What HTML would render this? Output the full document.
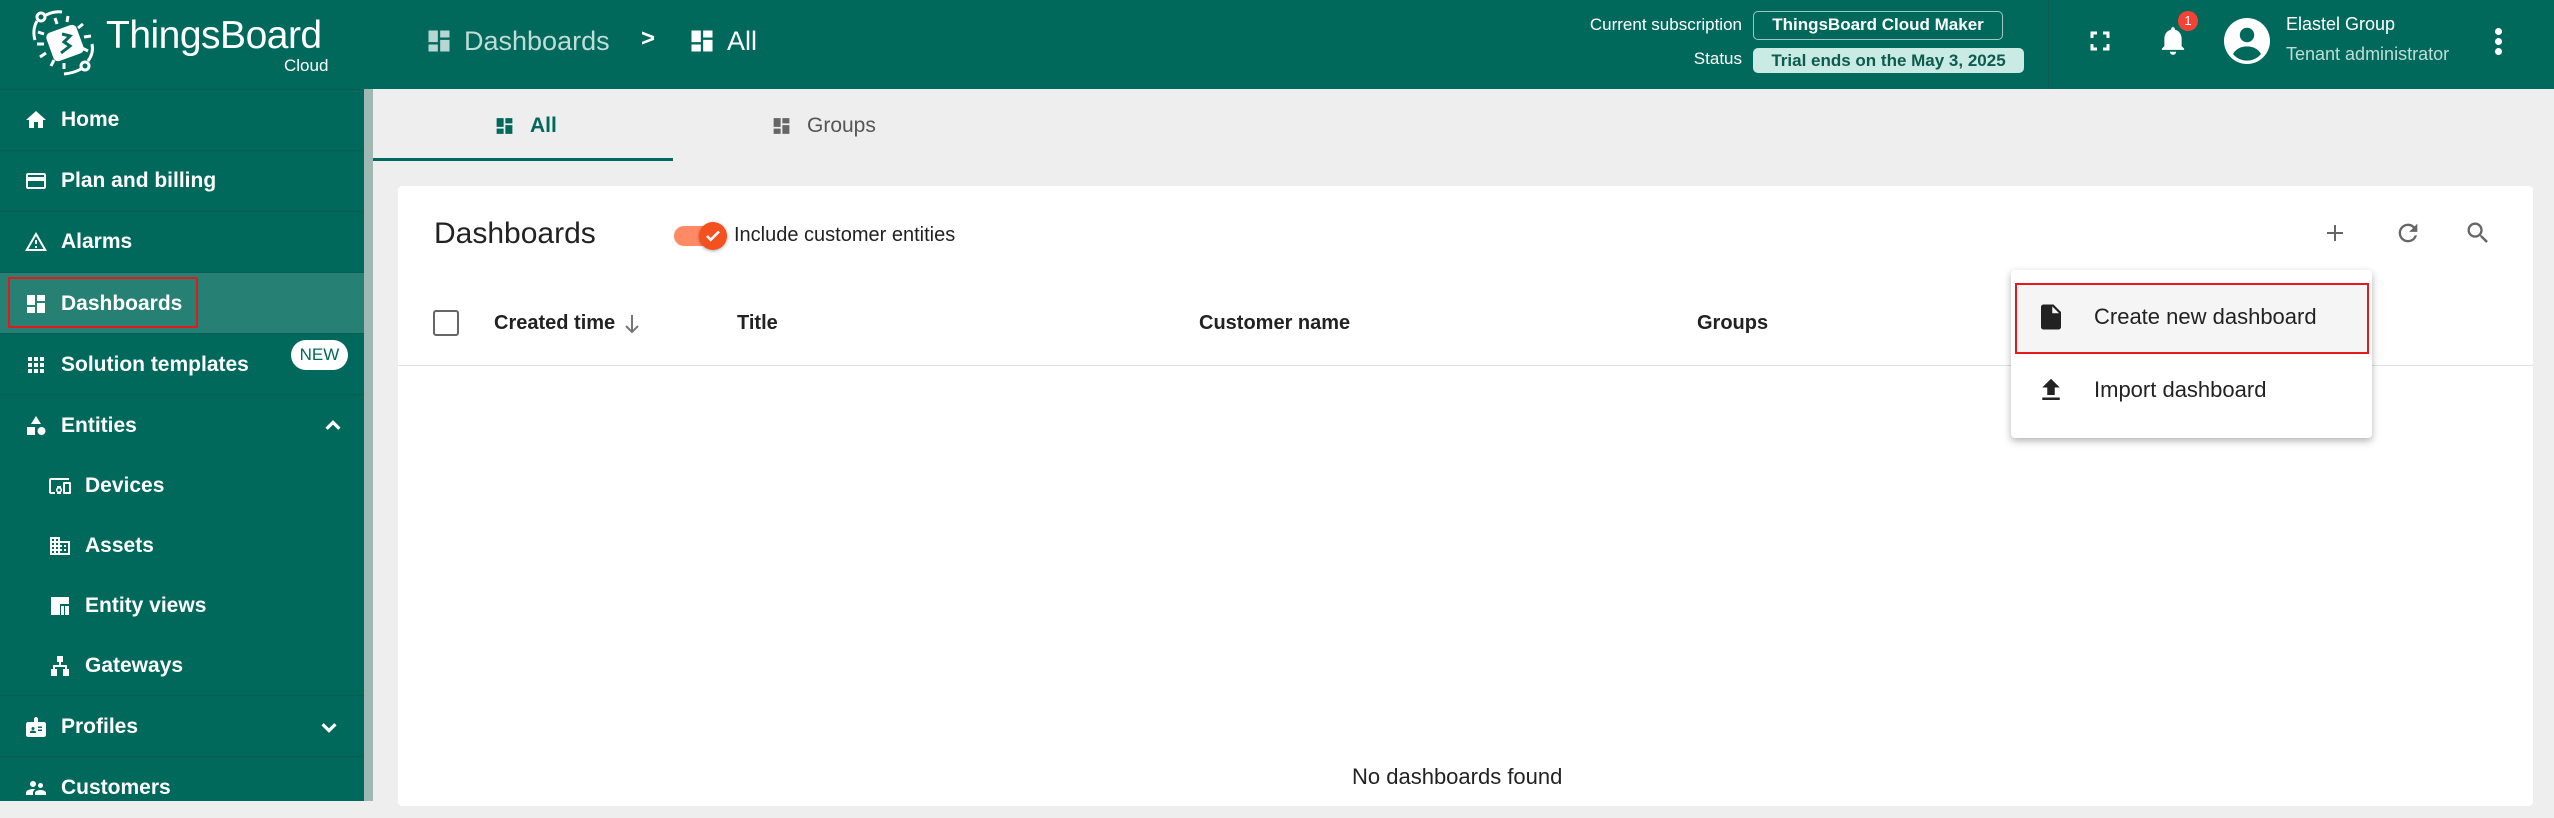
<!DOCTYPE html>
<html><head><meta charset="utf-8"><style>
*{box-sizing:border-box;margin:0;padding:0}
body{width:2554px;height:801px;overflow:hidden;background:#eeeeee;font-family:"Liberation Sans",sans-serif;position:relative}
.abs{position:absolute}
.hdr{left:0;top:0;width:2554px;height:89px;background:#00695c}
.side{left:0;top:89px;width:364px;height:712px;background:#00695c}
.scroll{left:364px;top:89px;width:9px;height:712px;background:#9fb8b3}
.item{position:absolute;left:0;width:364px;height:61px;color:#fff;font-size:21px;font-weight:bold;display:flex;align-items:center}
.item .t{position:absolute;left:61px}
.item.sub .t{left:85px}
.item svg{position:absolute;left:24px}
.item.sub svg{left:48px}
.div{position:absolute;left:0;width:364px;height:1px;background:#0b5d52}
.hw{color:#fff}
.card{left:398px;top:186px;width:2135px;height:620px;background:#fff;border-radius:4px}
.th{position:absolute;top:312px;font-size:20px;font-weight:bold;color:#222}
</style></head><body>
<div class="abs hdr"></div>
<!-- logo -->
<svg class="abs" style="left:24px;top:8px" width="82" height="68" viewBox="0 0 82 68">
<g fill="none" stroke="#fff" stroke-width="3"><circle cx="17" cy="9" r="4"/><path d="M22 7 Q30 3 38 4"/><path d="M13 13 Q8 22 11 32"/><circle cx="61" cy="58" r="4"/><path d="M57 61 Q50 65 40 66"/><path d="M64 53 Q70 45 68 36"/></g>
<g fill="#fff"><rect x="25" y="20" width="32" height="30" rx="5" transform="rotate(-20 41 35)"/></g>
<g stroke="#fff" stroke-width="3"><path d="M20 26l-6-2M20 36l-7 0M22 45l-6 4M33 16l-2-6M43 14l1-6M54 20l5-4M60 29l7-1M58 40l6 3M40 55l0 6M30 52l-3 6"/></g>
<path d="M38 26l8 2-6 6 6 4-9 7" stroke="#00695c" stroke-width="3" fill="none"/>
</svg>
<div class="abs hw" style="left:106px;top:14px;font-size:39px;letter-spacing:-0.5px">ThingsBoard</div>
<div class="abs hw" style="left:284px;top:56px;font-size:17px">Cloud</div>
<!-- breadcrumb -->
<svg class="abs" style="left:425px;top:27px" width="28" height="28" viewBox="0 0 24 24"><path fill="#b7d6d1" d="M3 13h8V3H3v10zm0 8h8v-6H3v6zm10 0h8V11h-8v10zm0-18v6h8V3h-8z"/></svg>
<div class="abs" style="left:464px;top:26px;font-size:27px;color:#c0dcd7">Dashboards</div>
<div class="abs hw" style="left:641px;top:25px;font-size:24px;font-weight:bold">&gt;</div>
<svg class="abs" style="left:688px;top:27px" width="28" height="28" viewBox="0 0 24 24"><path fill="#fff" d="M3 13h8V3H3v10zm0 8h8v-6H3v6zm10 0h8V11h-8v10zm0-18v6h8V3h-8z"/></svg>
<div class="abs hw" style="left:727px;top:26px;font-size:27px">All</div>
<!-- header right -->
<div class="abs hw" style="left:1500px;width:1242px;top:15px;font-size:17px;text-align:right;width:242px">Current subscription</div>
<div class="abs hw" style="left:1753px;top:11px;width:250px;height:29px;border:1.5px solid #9cc9c1;border-radius:5px;font-size:17px;font-weight:bold;text-align:center;line-height:26px">ThingsBoard Cloud Maker</div>
<div class="abs hw" style="left:1500px;top:49px;font-size:17px;text-align:right;width:242px">Status</div>
<div class="abs" style="left:1753px;top:48px;width:271px;height:25px;background:#c9ebe3;border-radius:5px;font-size:17px;font-weight:bold;color:#0b5b50;text-align:center;line-height:25px">Trial ends on the May 3, 2025</div>
<div class="abs" style="left:2048px;top:0;width:1px;height:89px;background:#0b5d52"></div>
<svg class="abs" style="left:2088px;top:29px" width="24" height="24" viewBox="0 0 24 24"><path fill="none" stroke="#fff" stroke-width="3" d="M4 9V4h5M15 4h5v5M20 15v5h-5M9 20H4v-5"/></svg>
<svg class="abs" style="left:2158px;top:24px" width="30" height="32" viewBox="0 0 24 26"><path fill="#fff" d="M12 25c1.4 0 2.5-1.1 2.5-2.5h-5c0 1.4 1.1 2.5 2.5 2.5zm7-7v-6c0-3.7-2-6.6-5.5-7.4V4c0-.8-.7-1.5-1.5-1.5S10.5 3.2 10.5 4v.6C7 5.4 5 8.3 5 12v6l-2 2v1h18v-1l-2-2z"/></svg>
<div class="abs hw" style="left:2178px;top:11px;width:20px;height:20px;border-radius:10px;background:#f44336;font-size:13px;text-align:center;line-height:20px">1</div>
<svg class="abs" style="left:2223px;top:17px" width="48" height="48" viewBox="0 0 24 24"><circle cx="12" cy="12" r="11.5" fill="#fff"/><circle cx="12" cy="9" r="3.6" fill="#00695c"/><path d="M5 18.5c1.5-2.6 4.1-3.8 7-3.8s5.5 1.2 7 3.8A9 9 0 0 1 5 18.5z" fill="#00695c"/></svg>
<div class="abs hw" style="left:2286px;top:14px;font-size:18px">Elastel Group</div>
<div class="abs" style="left:2286px;top:44px;font-size:18px;color:#c0dcd7">Tenant administrator</div>
<div class="abs" style="left:2495px;top:28px;width:7px;height:7px;border-radius:4px;background:#fff"></div>
<div class="abs" style="left:2495px;top:38px;width:7px;height:7px;border-radius:4px;background:#fff"></div>
<div class="abs" style="left:2495px;top:48px;width:7px;height:7px;border-radius:4px;background:#fff"></div>

<!-- sidebar -->
<div class="abs side">
<div class="div" style="top:0"></div>
<div class="item" style="top:0"><svg width="24" height="24" viewBox="0 0 24 24"><path fill="#fff" d="M10 20v-6h4v6h5v-8h3L12 3 2 12h3v8z"/></svg><span class="t">Home</span></div>
<div class="div" style="top:61px"></div>
<div class="item" style="top:61px"><svg width="24" height="24" viewBox="0 0 24 24"><path fill="#fff" d="M20 4H4c-1.1 0-2 .9-2 2v12c0 1.1.9 2 2 2h16c1.1 0 2-.9 2-2V6c0-1.1-.9-2-2-2zm0 14H4v-6h16v6zm0-10H4V6h16v2z"/></svg><span class="t">Plan and billing</span></div>
<div class="div" style="top:122px"></div>
<div class="item" style="top:122px"><svg width="24" height="24" viewBox="0 0 24 24"><path fill="#fff" d="M12 5.99L19.53 19H4.47L12 5.99M12 2L1 21h22L12 2zm1 14h-2v2h2v-2zm0-6h-2v4h2v-4z"/></svg><span class="t">Alarms</span></div>
<div class="div" style="top:183px"></div>
<div class="item" style="top:184px;background:#268073"><svg width="24" height="24" viewBox="0 0 24 24"><path fill="#fff" d="M3 13h8V3H3v10zm0 8h8v-6H3v6zm10 0h8V11h-8v10zm0-18v6h8V3h-8z"/></svg><span class="t">Dashboards</span></div>
<div class="abs" style="left:8px;top:188px;width:190px;height:51px;border:2.5px solid #e3191b"></div>
<div class="div" style="top:244px"></div>
<div class="item" style="top:245px"><svg width="24" height="24" viewBox="0 0 24 24"><path fill="#fff" d="M4 4h4v4H4zm6 0h4v4h-4zm6 0h4v4h-4zM4 10h4v4H4zm6 0h4v4h-4zm6 0h4v4h-4zM4 16h4v4H4zm6 0h4v4h-4zm6 0h4v4h-4z"/></svg><span class="t">Solution templates</span></div>
<div class="abs" style="left:291px;top:251px;width:57px;height:30px;border-radius:15px;background:#fff;color:#00695c;font-size:17px;text-align:center;line-height:30px">NEW</div>
<div class="div" style="top:305px"></div>
<div class="item" style="top:306px"><svg width="24" height="24" viewBox="0 0 24 24"><path fill="#fff" d="M12 2l5 8H7zM3 13h8v8H3zM17.5 13a4 4 0 1 1 0 8 4 4 0 0 1 0-8z"/></svg><span class="t">Entities</span><svg style="left:322px" width="22" height="22" viewBox="0 0 24 24"><path fill="none" stroke="#fff" stroke-width="3.5" d="M5 15l7-7 7 7"/></svg></div>
<div class="item sub" style="top:366px"><svg width="24" height="24" viewBox="0 0 24 24"><path fill="#fff" d="M3 6h18V4H3c-1.1 0-2 .9-2 2v12c0 1.1.9 2 2 2h4v-2H3V6zm10 6H9v1.78c-.61.55-1 1.33-1 2.22s.39 1.67 1 2.22V20h4v-1.78c.61-.55 1-1.34 1-2.22s-.39-1.67-1-2.22V12zm-2 5.5c-.83 0-1.5-.67-1.5-1.5s.67-1.5 1.5-1.5 1.5.67 1.5 1.5-.67 1.5-1.5 1.5zM22 8h-6c-.5 0-1 .5-1 1v10c0 .5.5 1 1 1h6c.5 0 1-.5 1-1V9c0-.5-.5-1-1-1zm-1 10h-4v-8h4v8z"/></svg><span class="t">Devices</span></div>
<div class="item sub" style="top:426px"><svg width="24" height="24" viewBox="0 0 24 24"><path fill="#fff" d="M12 7V3H2v18h20V7H12zM6 19H4v-2h2v2zm0-4H4v-2h2v2zm0-4H4V9h2v2zm0-4H4V5h2v2zm4 12H8v-2h2v2zm0-4H8v-2h2v2zm0-4H8V9h2v2zm0-4H8V5h2v2zm10 12h-8v-2h2v-2h-2v-2h2v-2h-2V9h8v10zm-2-8h-2v2h2v-2zm0 4h-2v2h2v-2z"/></svg><span class="t">Assets</span></div>
<div class="item sub" style="top:486px"><svg width="24" height="24" viewBox="0 0 24 24"><path fill="#fff" d="M3 3h18v7H12v11H3zM13 12h3v9h-3zM17 12h4v9h-4z"/></svg><span class="t">Entity views</span></div>
<div class="item sub" style="top:546px"><svg width="24" height="24" viewBox="0 0 24 24"><path fill="#fff" d="M9 2h6v6h-2v3h6v4h2v7h-6v-7h2v-2h-10v2h2v7H3v-7h2v-4h6V8H9z"/></svg><span class="t">Gateways</span></div>
<div class="div" style="top:606px"></div>
<div class="item" style="top:607px"><svg width="24" height="24" viewBox="0 0 24 24"><path fill="#fff" d="M20 7h-6V4c0-1-1-2-2-2s-2 1-2 2v3H4c-1 0-2 1-2 2v11c0 1 1 2 2 2h16c1 0 2-1 2-2V9c0-1-1-2-2-2zM9 12a1.5 1.5 0 1 1 0 3 1.5 1.5 0 0 1 0-3zm3 6H6v-1c0-1 2-1.5 3-1.5s3 .5 3 1.5v1zm6-2h-4v-1.5h4V16zm0-3h-4v-1.5h4V13z"/></svg><span class="t">Profiles</span><svg style="left:318px" width="22" height="22" viewBox="0 0 24 24"><path fill="none" stroke="#fff" stroke-width="3.5" d="M5 9l7 7 7-7"/></svg></div>
<div class="div" style="top:667px"></div>
<div class="item" style="top:668px"><svg width="24" height="24" viewBox="0 0 24 24"><path fill="#fff" d="M16.5 12a2.5 2.5 0 1 0 0-5 2.5 2.5 0 0 0 0 5zM9 11a3 3 0 1 0 0-6 3 3 0 0 0 0 6zm7.5 3c-1.8 0-5.5.9-5.5 2.8V19h11v-2.2c0-1.9-3.7-2.8-5.5-2.8zM9 13c-2.3 0-7 1.2-7 3.5V19h7v-2.2c0-.9.3-2.3 2.4-3.5-.9-.2-1.8-.3-2.4-.3z"/></svg><span class="t">Customers</span></div>
</div>
<div class="abs scroll"></div>

<!-- tabs -->
<svg class="abs" style="left:494px;top:115px" width="21" height="22" viewBox="0 0 24 24"><path fill="#00695c" d="M3 13h8V3H3v10zm0 8h8v-6H3v6zm10 0h8V11h-8v10zm0-18v6h8V3h-8z"/></svg>
<div class="abs" style="left:530px;top:114px;font-size:21px;font-weight:bold;color:#00695c">All</div>
<div class="abs" style="left:373px;top:158px;width:300px;height:3px;background:#00695c"></div>
<svg class="abs" style="left:771px;top:115px" width="21" height="22" viewBox="0 0 24 24"><path fill="#666" d="M3 13h8V3H3v10zm0 8h8v-6H3v6zm10 0h8V11h-8v10zm0-18v6h8V3h-8z"/></svg>
<div class="abs" style="left:807px;top:114px;font-size:21px;color:#555">Groups</div>

<!-- card -->
<div class="abs card"></div>
<div class="abs" style="left:434px;top:217px;font-size:30px;color:#222">Dashboards</div>
<div class="abs" style="left:674px;top:226px;width:40px;height:20px;border-radius:10px;background:#ff8a65"></div>
<div class="abs" style="left:699px;top:222px;width:28px;height:28px;border-radius:14px;background:#f4511e;box-shadow:0 1px 3px rgba(0,0,0,.35)"></div>
<svg class="abs" style="left:704px;top:227px" width="18" height="18" viewBox="0 0 24 24"><path fill="none" stroke="#fff" stroke-width="3.5" d="M4 12l5 5L20 6"/></svg>
<div class="abs" style="left:734px;top:224px;font-size:20px;color:#222">Include customer entities</div>
<svg class="abs" style="left:2323px;top:221px" width="24" height="24" viewBox="0 0 24 24"><path stroke="#666" stroke-width="2" d="M12 4v16M4 12h16"/></svg>
<svg class="abs" style="left:2394px;top:219px" width="28" height="28" viewBox="0 0 24 24"><path fill="#666" d="M17.65 6.35A7.958 7.958 0 0 0 12 4c-4.42 0-7.99 3.58-7.99 8s3.57 8 7.99 8c3.73 0 6.84-2.55 7.73-6h-2.08A5.99 5.99 0 0 1 12 18c-3.31 0-6-2.69-6-6s2.69-6 6-6c1.66 0 3.14.69 4.22 1.78L13 11h7V4l-2.35 2.35z"/></svg>
<svg class="abs" style="left:2464px;top:219px" width="28" height="28" viewBox="0 0 24 24"><path fill="#666" d="M15.5 14h-.79l-.28-.27A6.471 6.471 0 0 0 16 9.5 6.5 6.5 0 1 0 9.5 16c1.61 0 3.09-.59 4.23-1.57l.27.28v.79l5 4.99L20.49 19l-4.99-5zm-6 0C7.01 14 5 11.99 5 9.5S7.01 5 9.5 5 14 7.01 14 9.5 11.99 14 9.5 14z"/></svg>
<div class="abs" style="left:433px;top:310px;width:26px;height:26px;border:2.5px solid #666;border-radius:3px"></div>
<div class="th" style="left:494px">Created time</div>
<svg class="abs" style="left:623px;top:313px" width="18" height="22" viewBox="0 0 18 22"><path fill="none" stroke="#777" stroke-width="2" d="M9 2v17M3 13l6 6 6-6"/></svg>
<div class="th" style="left:737px">Title</div>
<div class="th" style="left:1199px">Customer name</div>
<div class="th" style="left:1697px">Groups</div>
<div class="abs" style="left:398px;top:365px;width:2135px;height:1px;background:#e0e0e0"></div>
<div class="abs" style="left:1352px;top:764px;font-size:22px;color:#222">No dashboards found</div>

<!-- menu -->
<div class="abs" style="left:2011px;top:270px;width:361px;height:168px;background:#fff;border-radius:4px;box-shadow:0 3px 8px rgba(0,0,0,.3)"></div>
<div class="abs" style="left:2015px;top:283px;width:354px;height:71px;background:#f5f5f5;border:2.5px solid #e3191b"></div>
<svg class="abs" style="left:2036px;top:302px" width="30" height="30" viewBox="0 0 24 24"><path fill="#222" d="M6 2c-1.1 0-2 .9-2 2v16c0 1.1.9 2 2 2h12c1.1 0 2-.9 2-2V8l-6-6H6zm7 7V3.5L18.5 9H13z"/></svg>
<div class="abs" style="left:2094px;top:304px;font-size:22px;color:#222">Create new dashboard</div>
<svg class="abs" style="left:2036px;top:375px" width="30" height="30" viewBox="0 0 24 24"><path fill="#222" d="M9 16h6v-6h4l-7-7-7 7h4zm-4 2h14v2H5z"/></svg>
<div class="abs" style="left:2094px;top:377px;font-size:22px;color:#222">Import dashboard</div>
</body></html>
